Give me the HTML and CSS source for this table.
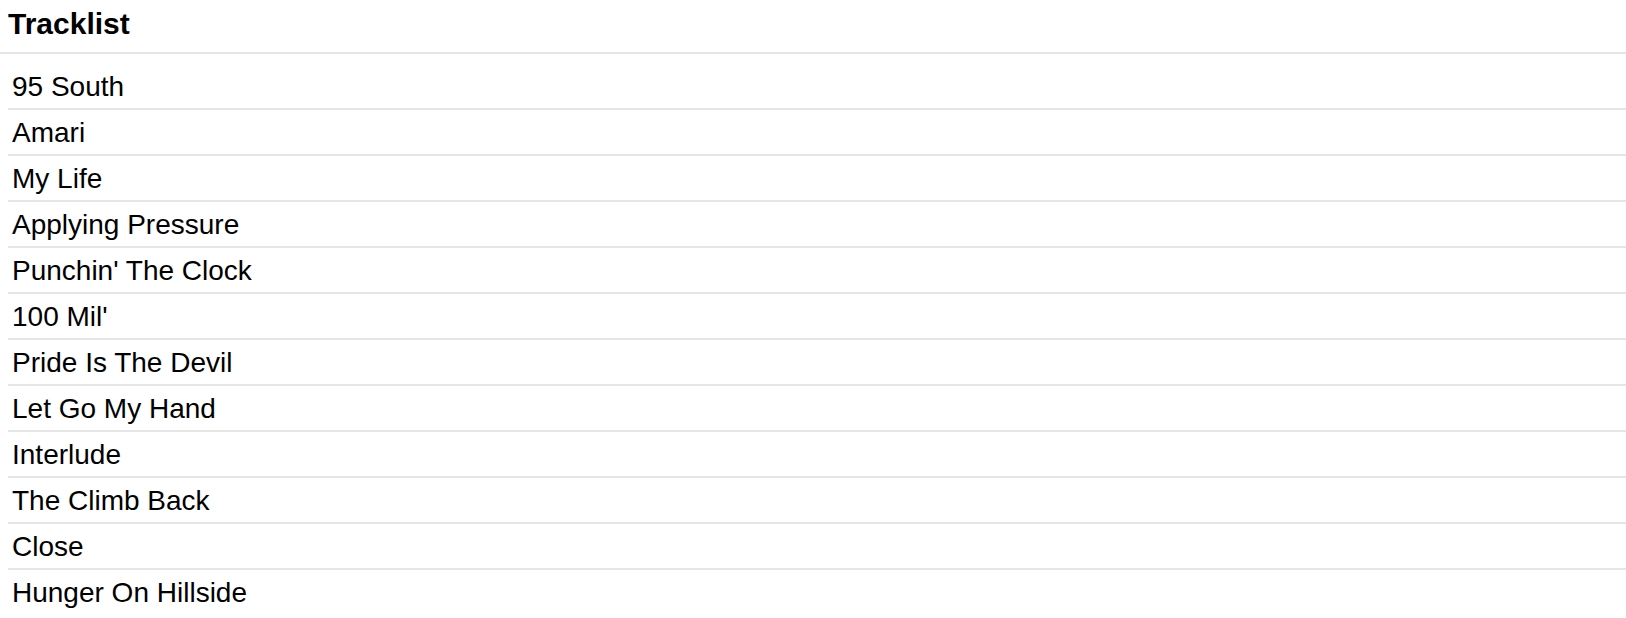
FILE: index.html
```html
<!DOCTYPE html>
<html>
<head>
<meta charset="utf-8">
<link rel="stylesheet" href="styles.css">
</head>
<body>
<div class="tracklist">
  <h2 class="tracklist-title">Tracklist</h2>
  <ul class="tracks">
    <li class="track">95 South</li>
    <li class="track">Amari</li>
    <li class="track">My Life</li>
    <li class="track">Applying Pressure</li>
    <li class="track">Punchin' The Clock</li>
    <li class="track">100 Mil'</li>
    <li class="track">Pride Is The Devil</li>
    <li class="track">Let Go My Hand</li>
    <li class="track">Interlude</li>
    <li class="track">The Climb Back</li>
    <li class="track">Close</li>
    <li class="track">Hunger On Hillside</li>
  </ul>
</div>
</body>
</html>
```

FILE: styles.css
```css
html, body {
  margin: 0;
  padding: 0;
  background: #ffffff;
}

body {
  font-family: "Liberation Sans", Arial, Helvetica, sans-serif;
  color: #000000;
}

.tracklist {
  display: flex;
  flex-direction: column;
}

.tracklist-title {
  margin: 0;
  padding: 8px 0 12px 8px;
  font-size: 30px;
  line-height: 32px;
  font-weight: bold;
  border-bottom: 2px solid #e5e5e5;
}

.tracks {
  list-style: none;
  margin: 0;
  padding: 10px 0 0 8px;
}

.track {
  padding: 7px 0 5px 4px;
  font-size: 28px;
  line-height: 32px;
  border-bottom: 2px solid #e5e5e5;
}

.track:last-child {
  border-bottom: none;
}
```
